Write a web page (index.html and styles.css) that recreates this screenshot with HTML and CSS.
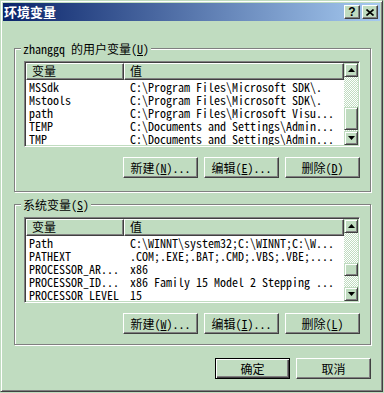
FILE: index.html
```html
<!DOCTYPE html>
<html lang="zh-CN">
<head>
    <meta charset="UTF-8">
    <title>环境变量</title>
    <link rel="stylesheet" href="styles.css">
</head>
<body>
    <div class="window">
        <div class="titlebar">
            <span class="title">环境变量</span>
            <div class="caption-buttons">
                <span class="cap-btn">?</span>
                <span class="cap-btn">
                    <svg width="8" height="7" viewBox="0 0 8 7"><path d="M0.5 0.5 L7.5 6.5 M7.5 0.5 L0.5 6.5" stroke="#000" stroke-width="1.6" fill="none"/></svg>
                </span>
            </div>
        </div>

        <fieldset class="group">
            <legend>zhanggq 的用户变量(<u>U</u>)</legend>
            <div class="list">
                <div class="list-body">
                    <div class="list-head">
                        <div class="head-cell head-name">变量</div>
                        <div class="head-cell head-value">值</div>
                    </div>
                    <div class="row"><span class="cell-name">MSSdk</span><span class="cell-value">C:\Program Files\Microsoft SDK\.</span></div>
                    <div class="row"><span class="cell-name">Mstools</span><span class="cell-value">C:\Program Files\Microsoft SDK\.</span></div>
                    <div class="row"><span class="cell-name">path</span><span class="cell-value">C:\Program Files\Microsoft Visu...</span></div>
                    <div class="row"><span class="cell-name">TEMP</span><span class="cell-value">C:\Documents and Settings\Admin...</span></div>
                    <div class="row"><span class="cell-name">TMP</span><span class="cell-value">C:\Documents and Settings\Admin...</span></div>
                </div>
                <div class="scrollbar">
                    <div class="sb-btn"><svg width="7" height="4" viewBox="0 0 7 4"><polygon points="0,4 7,4 3.5,0"/></svg></div>
                    <div class="sb-track"><div class="sb-thumb" style="margin-top: 30px; height: 23px"></div></div>
                    <div class="sb-btn"><svg width="7" height="4" viewBox="0 0 7 4"><polygon points="0,0 7,0 3.5,4"/></svg></div>
                </div>
            </div>
            <div class="btn-row">
                <button class="btn">新建(<u>N</u>)...</button>
                <button class="btn">编辑(<u>E</u>)...</button>
                <button class="btn">删除(<u>D</u>)</button>
            </div>
        </fieldset>

        <fieldset class="group group-sys">
            <legend>系统变量(<u>S</u>)</legend>
            <div class="list">
                <div class="list-body">
                    <div class="list-head">
                        <div class="head-cell head-name">变量</div>
                        <div class="head-cell head-value">值</div>
                    </div>
                    <div class="row"><span class="cell-name">Path</span><span class="cell-value">C:\WINNT\system32;C:\WINNT;C:\W...</span></div>
                    <div class="row"><span class="cell-name">PATHEXT</span><span class="cell-value">.COM;.EXE;.BAT;.CMD;.VBS;.VBE;....</span></div>
                    <div class="row"><span class="cell-name">PROCESSOR_AR...</span><span class="cell-value">x86</span></div>
                    <div class="row"><span class="cell-name">PROCESSOR_ID...</span><span class="cell-value">x86 Family 15 Model 2 Stepping ...</span></div>
                    <div class="row"><span class="cell-name">PROCESSOR_LEVEL</span><span class="cell-value">15</span></div>
                </div>
                <div class="scrollbar">
                    <div class="sb-btn"><svg width="7" height="4" viewBox="0 0 7 4"><polygon points="0,4 7,4 3.5,0"/></svg></div>
                    <div class="sb-track"><div class="sb-thumb" style="margin-top: 30px; height: 13px"></div></div>
                    <div class="sb-btn"><svg width="7" height="4" viewBox="0 0 7 4"><polygon points="0,0 7,0 3.5,4"/></svg></div>
                </div>
            </div>
            <div class="btn-row">
                <button class="btn">新建(<u>W</u>)...</button>
                <button class="btn">编辑(<u>I</u>)...</button>
                <button class="btn">删除(<u>L</u>)</button>
            </div>
        </fieldset>

        <div class="dialog-buttons">
            <button class="btn btn-default">确定</button>
            <button class="btn">取消</button>
        </div>
    </div>
</body>
</html>
```

FILE: styles.css
```css
* {
    margin: 0;
    padding: 0;
    box-sizing: border-box;
}
body {
    background: #c0dcc0;
    font-family: "Noto Sans Mono CJK SC", "Noto Sans CJK SC", monospace;
    font-size: 12px;
    color: #000;
}
.window {
    width: 383px;
    height: 392px;
    border: 1px solid;
    border-color: #c0dcc0 #404040 #404040 #c0dcc0;
    box-shadow: inset 1px 1px #fff, inset -1px -1px #808080;
    padding: 2px;
    display: flex;
    flex-direction: column;
}
.titlebar {
    height: 18px;
    flex-shrink: 0;
    display: flex;
    align-items: center;
    justify-content: space-between;
    padding: 0 2px 0 1px;
    background: linear-gradient(90deg, #0a246a, #a6caf0);
}
.title {
    color: #fff;
    font-family: "Noto Sans CJK SC", sans-serif;
    font-weight: bold;
    font-size: 13px;
    line-height: 18px;
}
.caption-buttons {
    display: flex;
    gap: 2px;
}
.cap-btn {
    width: 16px;
    height: 14px;
    display: flex;
    align-items: center;
    justify-content: center;
    background: #c0dcc0;
    border: 1px solid;
    border-color: #fff #404040 #404040 #fff;
    box-shadow: inset -1px -1px #808080;
    font: bold 12px "Liberation Sans", sans-serif;
}
.group {
    margin: 21px 9px 0 11px;
    border: 1px solid #808080;
    box-shadow: inset 1px 1px #fff, 1px 1px #fff;
    padding: 6px 10px 13px 9px;
    min-width: 0;
}
.group-sys {
    margin-top: 6px;
    padding-bottom: 10px;
}
legend {
    margin-left: -3px;
    padding: 0 2px;
    line-height: 13px;
    background: #c0dcc0;
}
.list {
    height: 86px;
    display: flex;
    border: 1px solid;
    border-color: #808080 #fff #fff #808080;
    box-shadow: inset 1px 1px #404040, inset -1px -1px #c0dcc0;
    padding: 1px;
    background: #fff;
}
.list-body {
    flex: 1;
    min-width: 0;
    overflow: hidden;
}
.list-head {
    display: flex;
    height: 17px;
}
.head-cell {
    background: #c0dcc0;
    border: 1px solid;
    border-color: #fff #404040 #404040 #fff;
    box-shadow: inset -1px -1px #808080;
    padding-left: 5px;
    line-height: 14px;
}
.head-name {
    width: 98px;
}
.head-value {
    flex: 1;
}
.row {
    display: flex;
    height: 13px;
    line-height: 13px;
    white-space: nowrap;
}
.cell-name {
    width: 98px;
    flex-shrink: 0;
    padding-left: 3px;
}
.cell-value {
    flex: 1;
    min-width: 0;
    padding-left: 6px;
}
.scrollbar {
    width: 14px;
    display: flex;
    flex-direction: column;
}
.sb-btn,
.sb-thumb {
    background: #c0dcc0;
    border: 1px solid;
    border-color: #c0dcc0 #404040 #404040 #c0dcc0;
    box-shadow: inset 1px 1px #fff, inset -1px -1px #808080;
}
.sb-btn {
    height: 14px;
    display: flex;
    align-items: center;
    justify-content: center;
}
.sb-track {
    flex: 1;
    background: repeating-conic-gradient(#fff 0 25%, #c0dcc0 0 50%) 0 0 / 2px 2px;
}
.btn-row {
    display: flex;
    justify-content: flex-end;
    gap: 6px;
    margin-top: 10px;
}
.btn {
    width: 75px;
    height: 21px;
    font: inherit;
    color: #000;
    background: #c0dcc0;
    border: 1px solid;
    border-color: #fff #404040 #404040 #fff;
    box-shadow: inset -1px -1px #808080;
}
.btn-default {
    border-color: #000;
    box-shadow: inset 1px 1px #fff, inset -1px -1px #404040, inset -2px -2px #808080;
}
.dialog-buttons {
    display: flex;
    justify-content: flex-end;
    gap: 6px;
    margin: 13px 9px 0 0;
}
```
